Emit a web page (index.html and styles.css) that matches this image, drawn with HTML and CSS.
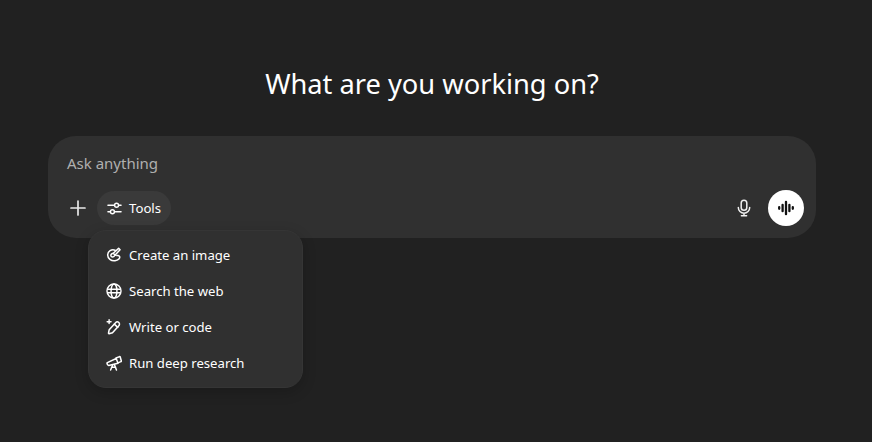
FILE: index.html
```html
<!DOCTYPE html>
<html lang="en">

<head>
  <meta charset="UTF-8" />
  <title>ChatGPT</title>
  <link rel="stylesheet" href="styles.css">
</head>

<body>
  <div class="container">
    <h1>What are you working on?</h1>
    <div class="composer">
      <div class="placeholder">Ask anything</div>
      <div class="toolbar">
        <button class="plus" type="button">
          <svg width="20" height="20" viewBox="0 0 20 20" fill="none" stroke="#e8e8e8" stroke-width="1.7" stroke-linecap="round">
            <path d="M10 3v14M3 10h14" />
          </svg>
        </button>
        <button class="tools" type="button">
          <svg width="15" height="15" viewBox="0 0 16 16" fill="none" stroke="#fff" stroke-width="1.5" stroke-linecap="round">
            <path d="M1 4.5h7M12.5 4.5h2.5M1 11.5h2.5M8 11.5h7" />
            <circle cx="10.2" cy="4.5" r="2.1" />
            <circle cx="5.8" cy="11.5" r="2.1" />
          </svg>
          Tools
        </button>
        <div class="spacer"></div>
        <button class="mic" type="button">
          <svg width="20" height="20" viewBox="0 0 20 20" fill="none" stroke="#f0f0f0" stroke-width="1.5" stroke-linecap="round">
            <rect x="7.2" y="2.2" width="5.6" height="10" rx="2.8" />
            <path d="M4.3 9.5a5.7 5.7 0 0 0 11.4 0M10 15.2v2.6M7.4 17.8h5.2" />
          </svg>
        </button>
        <button class="voice" type="button">
          <svg width="18" height="18" viewBox="0 0 18 18" fill="none" stroke="#111" stroke-width="2.3" stroke-linecap="round">
            <path d="M2.2 8.2v1.6M5.6 5.8v6.4M9 2.8v12.4M12.4 5.8v6.4M15.8 8.2v1.6" />
          </svg>
        </button>
      </div>

      <div class="menu">
        <div class="item">
          <svg width="16" height="16" viewBox="0 0 18 18" fill="none" stroke="#fff" stroke-width="1.7" stroke-linecap="round" stroke-linejoin="round">
            <path d="M10.2 3.6C6.2 2.2 2 4.6 1.9 8.8c-.1 4 3.9 7.2 8.3 6.6 3.4-.5 5.9-2.6 5.1-4.7-.5-1.3-2-1.3-3.1-1.1" />
            <path d="M8.2 7l-1.6.6C5 8.4 5 11 7 11.2c1.3.1 2.3-.7 3-1.8l5.8-6.2-1.6-1.7z" />
            <path d="M8.6 7.6l1.8 1.6" />
          </svg>
          Create an image
        </div>
        <div class="item">
          <svg width="16" height="16" viewBox="0 0 18 18" fill="none" stroke="#fff" stroke-width="1.6">
            <circle cx="9" cy="9" r="7.9" />
            <path d="M1.2 7h15.6M1.2 11h15.6" />
            <ellipse cx="9" cy="9" rx="3.3" ry="7.9" />
          </svg>
          Search the web
        </div>
        <div class="item">
          <svg width="16" height="16" viewBox="0 0 18 18" fill="none" stroke="#fff" stroke-width="1.7" stroke-linecap="round" stroke-linejoin="round">
            <path d="M3.6 12l6.9-7.6c1.2-1.3 2.8-1.5 3.9-.5s1 2.7-.2 4l-6.9 7.5-3.9 1.1c-.4.1-.7-.2-.6-.6z" />
            <path d="M9.3 5.8l4 3.6" />
            <path d="M3.5.8v4.4M1.3 3h4.4" stroke-width="1.6" />
          </svg>
          Write or code
        </div>
        <div class="item">
          <svg width="16" height="16" viewBox="0 0 18 18" fill="none" stroke="#fff" stroke-width="1.7" stroke-linecap="round" stroke-linejoin="round">
            <path d="M1.5 8.6l10-4.6 2 5.2-10.4 2.6c-.9.2-2.6-2.4-1.6-3.2z" />
            <path d="M11.3 3.4l3.9-1.6c.4-.1.6 0 .8.4l1.2 4.4c.1.4 0 .7-.4.8l-3.4 1.5" />
            <path d="M7.6 11l-2.4 5.8M9.4 10.6l2.4 6.2M6.2 13.8h4.6" />
          </svg>
          Run deep research
        </div>
      </div>
    </div>
  </div>
</body>

</html>
```

FILE: styles.css
```css
* {
  box-sizing: border-box;
}

body {
  margin: 0;
  height: 100vh;
  overflow: hidden;
  background-color: #212121;
  color: #fff;
  font-family: "Noto Sans", "Open Sans", sans-serif;
}

.container {
  padding: 65px 56px 0 48px;
}

h1 {
  margin: 0 0 33px;
  height: 38px;
  line-height: 38px;
  font-size: 27.25px;
  font-weight: 400;
  text-align: center;
}

.composer {
  position: relative;
  height: 102px;
  padding: 18px 12px 12px 19px;
  background-color: #303030;
  border-radius: 28px;
}

.placeholder {
  height: 20px;
  line-height: 19px;
  font-size: 15px;
  color: #afafaf;
}

.toolbar {
  display: flex;
  align-items: center;
  height: 34px;
  margin-top: 17px;
}

button {
  display: flex;
  align-items: center;
  justify-content: center;
  padding: 0;
  border: none;
  background: none;
  color: #fff;
  font: inherit;
}

.plus {
  width: 22px;
  margin-right: 8px;
}

.tools {
  gap: 7px;
  height: 34px;
  padding: 0 10px;
  background-color: #3a3a3a;
  border-radius: 17px;
  font-size: 13.2px;
}

.spacer {
  flex-grow: 1;
}

.mic {
  width: 36px;
  height: 36px;
  margin-right: 6px;
}

.voice {
  width: 36px;
  height: 36px;
  background-color: #fff;
  border-radius: 50%;
}

.menu {
  position: absolute;
  left: 40px;
  top: 94px;
  display: flex;
  flex-direction: column;
  width: 215px;
  height: 158px;
  padding: 6px 8px;
  background-color: #303030;
  border: 1px solid #353535;
  border-radius: 18px;
  box-shadow: 0 4px 14px rgba(0, 0, 0, 0.2);
}

.item {
  display: flex;
  align-items: center;
  gap: 7px;
  height: 36px;
  padding-left: 9px;
  font-size: 13.15px;
}
```
